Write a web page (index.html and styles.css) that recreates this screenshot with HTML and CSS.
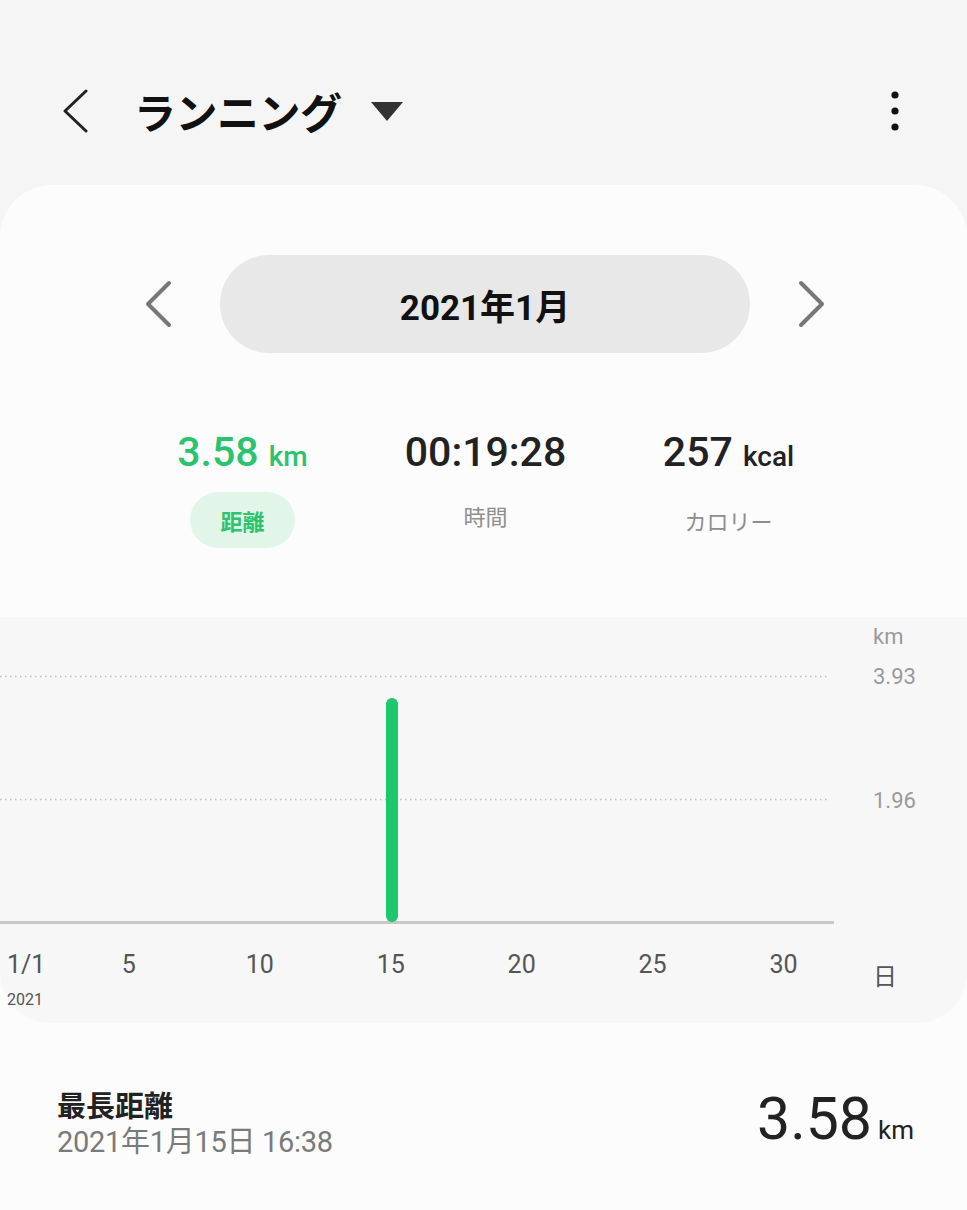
FILE: index.html
```html
<!DOCTYPE html>
<html lang="ja">
<head>
<meta charset="utf-8">
<title>ランニング</title>
<link rel="stylesheet" href="styles.css">
</head>
<body>
<header class="topbar">
  <svg class="back" width="32" height="44" viewBox="0 0 32 44"><path d="M28 2 L7 22 L28 42" fill="none" stroke="#222" stroke-width="3" stroke-linecap="round" stroke-linejoin="round"/></svg>
  <h1 class="title">ランニング</h1>
  <svg class="caret" width="34" height="22" viewBox="0 0 34 22"><path d="M1 1 H33 L17 20 Z" fill="#333"/></svg>
  <div class="spacer"></div>
  <svg class="kebab" width="10" height="42" viewBox="0 0 10 42"><circle cx="5" cy="5" r="3.6" fill="#111"/><circle cx="5" cy="21" r="3.6" fill="#111"/><circle cx="5" cy="37" r="3.6" fill="#111"/></svg>
</header>

<main class="sheet">
  <div class="month-row">
    <svg class="chev" width="28" height="48" viewBox="0 0 28 48"><path d="M25 3 L4 24 L25 45" fill="none" stroke="#777" stroke-width="4" stroke-linecap="round" stroke-linejoin="round"/></svg>
    <div class="month-pill">2021年1月</div>
    <svg class="chev" width="28" height="48" viewBox="0 0 28 48"><path d="M3 3 L24 24 L3 45" fill="none" stroke="#777" stroke-width="4" stroke-linecap="round" stroke-linejoin="round"/></svg>
  </div>

  <div class="stats">
    <div class="stat">
      <div class="value green">3.58 <span class="unit">km</span></div>
      <div class="label active">距離</div>
    </div>
    <div class="stat">
      <div class="value">00:19:28</div>
      <div class="label">時間</div>
    </div>
    <div class="stat">
      <div class="value">257 <span class="unit">kcal</span></div>
      <div class="label">カロリー</div>
    </div>
  </div>

  <section class="chart">
    <div class="plot">
      <svg width="834" height="307" viewBox="0 0 834 307">
        <line x1="0" y1="59.5" x2="830" y2="59.5" stroke="#bdbdbd" stroke-width="1.5" stroke-dasharray="1.5 3.5"/>
        <line x1="0" y1="182.5" x2="830" y2="182.5" stroke="#bdbdbd" stroke-width="1.5" stroke-dasharray="1.5 3.5"/>
        <line x1="0" y1="305.5" x2="834" y2="305.5" stroke="#c8c8c8" stroke-width="3"/>
        <line x1="392" y1="87" x2="392" y2="299" stroke="#1ec76e" stroke-width="12" stroke-linecap="round"/>
      </svg>
    </div>
    <div class="yaxis">
      <span class="ytick tick-unit">km</span>
      <span class="ytick tick-max">3.93</span>
      <span class="ytick tick-mid">1.96</span>
    </div>
    <div class="xaxis">
      <div class="xlabel first" style="grid-column:1">1/1<small>2021</small></div>
      <div class="xlabel" style="grid-column:5">5</div>
      <div class="xlabel" style="grid-column:10">10</div>
      <div class="xlabel" style="grid-column:15">15</div>
      <div class="xlabel" style="grid-column:20">20</div>
      <div class="xlabel" style="grid-column:25">25</div>
      <div class="xlabel" style="grid-column:30">30</div>
    </div>
    <div class="xunit">日</div>
  </section>

  <section class="record">
    <div class="record-text">
      <div class="record-title">最長距離</div>
      <div class="record-date">2021年1月15日 16:38</div>
    </div>
    <div class="record-value">3.58<span class="record-unit">km</span></div>
  </section>
</main>
</body>
</html>
```

FILE: styles.css
```css
* { box-sizing: border-box; }
html, body { margin: 0; padding: 0; }
body {
  width: 967px;
  height: 1210px;
  overflow: hidden;
  background: #f5f5f5;
  font-family: Roboto, "Noto Sans CJK JP", sans-serif;
  color: #222;
}

.topbar {
  display: flex;
  align-items: center;
  height: 60px;
  margin-top: 81px;
  margin-bottom: 44px;
  padding: 0 67px 0 58px;
}
.title {
  margin: 0 0 0 44px;
  font-family: "Noto Sans CJK JP", sans-serif;
  font-weight: 700;
  font-size: 42px;
  line-height: 1;
  color: #111;
  letter-spacing: -0.5px;
}
.caret { margin-left: 28px; margin-top: 2px; }
.spacer { flex: 1; }

.sheet {
  height: 1025px;
  background: #fcfcfc;
  border-radius: 52px 52px 0 0;
  padding-top: 70px;
  display: flex;
  flex-direction: column;
}

.month-row {
  display: flex;
  align-items: center;
  padding-left: 144px;
  gap: 48px;
}
.month-pill {
  width: 530px;
  height: 98px;
  border-radius: 49px;
  background: #e8e8e8;
  display: flex;
  align-items: center;
  justify-content: center;
  font-weight: 700;
  font-size: 35px;
  color: #111;
  font-family: Roboto, "Noto Sans CJK JP", sans-serif;
}

.stats {
  display: grid;
  grid-template-columns: repeat(3, 243px);
  padding-left: 121px;
  margin-top: 77px;
}
.stat {
  display: flex;
  flex-direction: column;
  align-items: center;
}
.value {
  font-size: 41px;
  line-height: 44px;
  font-weight: 500;
  color: #222;
  white-space: nowrap;
}
.value .unit { font-size: 28px; }
.value.green { color: #2bc36d; }
.label {
  margin-top: 13px;
  height: 56px;
  line-height: 56px;
  padding: 0 30px;
  border-radius: 28px;
  font-family: "Noto Sans CJK JP", sans-serif;
  font-size: 22px;
  color: #8e8e8e;
}
.label.active {
  background: #e2f5e9;
  color: #2bc36d;
  font-weight: 700;
}

.chart {
  margin-top: 69px;
  height: 406px;
  background: #f7f7f7;
  border-radius: 0 0 50px 50px;
  display: grid;
  grid-template-columns: 834px 1fr;
  grid-template-rows: 307px 1fr;
}
.plot svg { display: block; }
.yaxis { position: relative; }
.ytick {
  position: absolute;
  left: 39px;
  font-size: 22px;
  line-height: 24px;
  color: #9a9a9a;
}
.tick-unit { top: 8px; }
.tick-max { top: 48px; }
.tick-mid { top: 172px; }

.xaxis {
  display: grid;
  grid-template-columns: repeat(31, 26.2px);
  padding-left: 11px;
  align-items: start;
}
.xlabel {
  grid-row: 1;
  justify-self: center;
  white-space: nowrap;
  margin-top: 27px;
  font-size: 25px;
  line-height: 28px;
  color: #555;
}
.xlabel.first {
  justify-self: start;
  margin-left: -4px;
  display: flex;
  flex-direction: column;
}
.xlabel small {
  font-size: 16px;
  line-height: 18px;
  margin-top: 12px;
}
.xunit {
  padding-left: 39px;
  margin-top: 37px;
  font-family: "Noto Sans CJK JP", sans-serif;
  font-size: 24px;
  line-height: 28px;
  color: #555;
}

.record {
  flex: 1;
  display: flex;
  align-items: center;
  justify-content: space-between;
  padding: 12px 53px 0 57px;
}
.record-title {
  font-family: "Noto Sans CJK JP", sans-serif;
  font-weight: 700;
  font-size: 29px;
  line-height: 38px;
  color: #222;
}
.record-date {
  font-size: 29px;
  line-height: 38px;
  color: #7a7a7a;
  letter-spacing: -0.3px;
}
.record-value {
  font-size: 59px;
  line-height: 64px;
  color: #222;
  margin-top: 4px;
}
.record-unit {
  font-size: 26px;
  margin-left: 6px;
}
```
